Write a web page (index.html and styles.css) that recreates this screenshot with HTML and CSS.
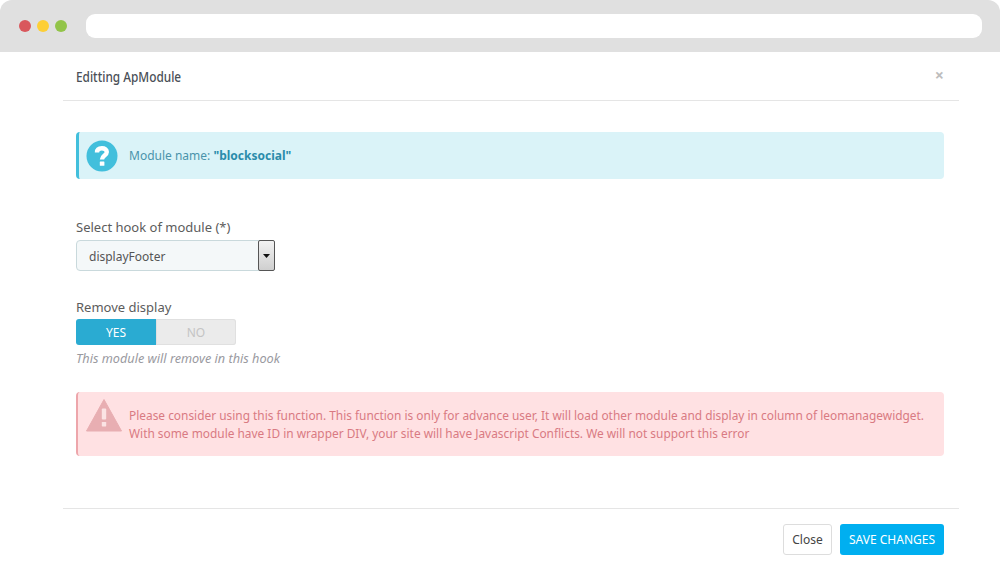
FILE: index.html
```html
<!DOCTYPE html>
<html lang="en">
<head>
<meta charset="utf-8">
<title>Editting ApModule</title>
<link rel="stylesheet" href="styles.css">
</head>
<body>
<div class="browser">
  <div class="chrome">
    <div class="dots"><span class="dot red"></span><span class="dot yellow"></span><span class="dot green"></span></div>
    <div class="address"></div>
  </div>
  <div class="modal">
    <div class="modal-header">
      <h4 class="modal-title">Editting ApModule</h4>
      <span class="close-x">×</span>
    </div>
    <div class="modal-body">
      <div class="alert info">
        <svg class="alert-icon" width="32" height="32" viewBox="0 0 32 32"><circle cx="16" cy="16" r="15.5" fill="#42bfdc"/><path d="M11 12.500c0-3 2.100-4.300 4.900-4.300 2.900 0 4.900 1.500 4.900 3.800 0 3.700-4.800 3.400-4.800 7.500" fill="none" stroke="#fff" stroke-width="4.400"/><rect x="13.800" y="21.500" width="4.600" height="4.200" rx=".5" fill="#fff"/></svg>
        <p class="alert-text">Module name: <b>"blocksocial"</b></p>
      </div>
      <div class="field-select">
        <div class="label">Select hook of module (*)</div>
        <div class="select">
          <span class="select-value">displayFooter</span>
          <span class="select-btn"><svg width="7" height="4" viewBox="0 0 7 4"><path d="M0 0h7L3.500 4z" fill="#111"/></svg></span>
        </div>
      </div>
      <div class="field-switch">
        <div class="label">Remove display</div>
        <div class="switch"><span class="sw yes">YES</span><span class="sw no">NO</span></div>
        <div class="help">This module will remove in this hook</div>
      </div>
      <div class="alert danger">
        <svg class="alert-icon warn" width="36" height="34" viewBox="0 0 36 34"><path d="M18 1.500 35.500 33H.5z" fill="#e8aeb2" stroke="#e8aeb2" stroke-linejoin="round"/><rect x="15.800" y="10.500" width="4.400" height="11" rx="1" fill="#fbe3e4"/><rect x="15.800" y="24" width="4.400" height="4.400" rx=".6" fill="#fbe3e4"/></svg>
        <p class="alert-text">Please consider using this function. This function is only for advance user, It will load other module and display in column of leomanagewidget.<br>With some module have ID in wrapper DIV, your site will have Javascript Conflicts. We will not support this error</p>
      </div>
    </div>
    <div class="modal-footer">
      <button class="btn btn-close">Close</button>
      <button class="btn btn-save">SAVE CHANGES</button>
    </div>
  </div>
</div>
</body>
</html>
```
FILE: styles.css
```css
* { box-sizing: border-box; }
html, body { margin: 0; padding: 0; }
body {
  width: 1000px;
  height: 567px;
  overflow: hidden;
  background: #fff;
  font-family: "Noto Sans", "Open Sans", sans-serif;
  color: #555;
}
.browser { width: 1000px; height: 567px; display: flex; flex-direction: column; }
.chrome {
  height: 52px;
  flex: none;
  background: #e0e0e0;
  border-radius: 12px 12px 0 0;
  display: flex;
  align-items: center;
  padding: 0 18px 0 19px;
}
.dots { display: flex; gap: 6px; margin-right: 18.500px; }
.dot { width: 12px; height: 12px; border-radius: 50%; }
.red { background: #d9575c; }
.yellow { background: #fdcf36; }
.green { background: #92c449; }
.address { flex: 1; height: 24px; background: #fff; border-radius: 9px; }

.modal { width: 896px; margin-left: 63px; flex: 1; display: flex; flex-direction: column; }
.modal-header {
  height: 49px;
  flex: none;
  border-bottom: 1px solid #e5e5e5;
  display: flex;
  align-items: center;
  justify-content: space-between;
  padding: 0 15px 0 13px;
}
.modal-title {
  margin: 0;
  font-size: 14.500px;
  font-weight: 500;
  color: #4a4f57;
  transform: scaleX(.816);
  transform-origin: left center;
}
.close-x { font-size: 16px; font-weight: 700; color: #bdbdbd; line-height: 1; position: relative; top: -1px; }

.modal-body { flex: 1; padding: 31px 15px 0 13px; display: flex; flex-direction: column; }
.alert { display: flex; align-items: center; border-radius: 4px; }
.alert-text { margin: 0; font-size: 12px; line-height: 18px; }
.info {
  height: 47px;
  background: #daf3f8;
  border-left: 3px solid #42bfdc;
  padding-left: 7px;
  color: #4a93ab;
}
.info .alert-icon { margin-right: 11px; flex: none; }
.info b { font-weight: 700; color: #2a8cab; }

.label { font-size: 13px; line-height: 18px; color: #5c5c5c; }
.field-select { margin-top: 39px; }
.select {
  width: 199px;
  height: 31px;
  margin-top: 4px;
  background: #f4f8f9;
  border: 1px solid #c9d9dc;
  border-radius: 4px;
  display: flex;
  align-items: center;
  justify-content: space-between;
  font-size: 12px;
  color: #555;
  padding-left: 12px;
}
.select-value { position: relative; top: 1px; }
.select-btn {
  width: 17px;
  height: 31px;
  margin-right: -1px;
  border: 1px solid #555;
  border-radius: 2px;
  background: linear-gradient(#f2f2f2, #cfcfcf);
  display: flex;
  align-items: center;
  justify-content: center;
}
.field-switch { margin-top: 27px; }
.switch { display: flex; width: 160px; height: 26px; margin-top: 3px; font-size: 12px; }
.sw { width: 80px; display: flex; align-items: center; justify-content: center; }
.yes { background: #2aabd2; color: #fff; border-radius: 3px 0 0 3px; }
.no { background: #ebebeb; color: #c4c4c4; border-radius: 0 3px 3px 0; box-shadow: inset 0 0 0 1px #e0e0e0; }
.help { margin-top: 5px; font-size: 12.700px; line-height: 17px; font-style: italic; color: #9a9a9f; }

.danger {
  height: 64px;
  margin-top: 25px;
  background: #ffe1e3;
  border-left: 2px solid #eda6ab;
  padding-left: 8px;
  color: #d97a82;
}
.danger .alert-text { font-size: 11.900px; }
.danger .alert-icon { margin: -18px 7px 0 0; flex: none; }

.modal-footer {
  height: 59px;
  flex: none;
  border-top: 1px solid #e5e5e5;
  display: flex;
  justify-content: flex-end;
  align-items: flex-start;
  gap: 8px;
  padding: 15px 15px 0 0;
}
.btn { height: 31px; border-radius: 3px; font-family: inherit; font-size: 12px; padding: 0; }
.btn-close { width: 49px; background: #fff; border: 1px solid #ddd; color: #444; }
.btn-save { width: 104px; background: #00aff0; border: 0; color: #fff; }
```
